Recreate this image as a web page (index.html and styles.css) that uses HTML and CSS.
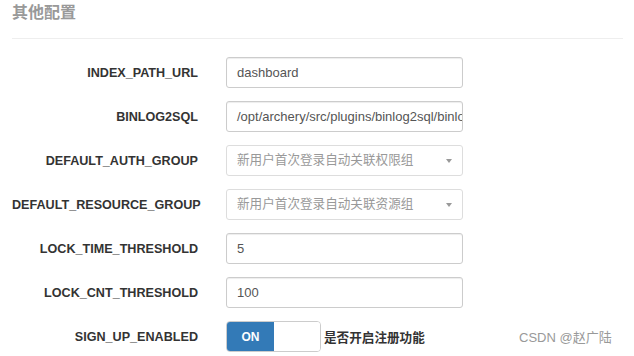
FILE: index.html
```html
<!DOCTYPE html>
<html>
<head>
<meta charset="utf-8">
<link rel="stylesheet" href="styles.css">
</head>
<body>
<div class="page">
  <h4 class="title">其他配置</h4>
  <div class="rule"></div>
  <div class="form">
    <div class="row"><label class="lbl">INDEX_PATH_URL</label><div class="field"><div class="input">dashboard</div></div></div>
    <div class="row"><label class="lbl">BINLOG2SQL</label><div class="field"><div class="input clip">/opt/archery/src/plugins/binlog2sql/binlog2sql.py</div></div></div>
    <div class="row"><label class="lbl">DEFAULT_AUTH_GROUP</label><div class="field"><div class="input select"><span class="ph">新用户首次登录自动关联权限组</span><span class="caret"></span></div></div></div>
    <div class="row"><label class="lbl">DEFAULT_RESOURCE_GROUP</label><div class="field"><div class="input select"><span class="ph">新用户首次登录自动关联资源组</span><span class="caret"></span></div></div></div>
    <div class="row"><label class="lbl">LOCK_TIME_THRESHOLD</label><div class="field"><div class="input">5</div></div></div>
    <div class="row"><label class="lbl">LOCK_CNT_THRESHOLD</label><div class="field"><div class="input">100</div></div></div>
    <div class="row"><label class="lbl">SIGN_UP_ENABLED</label><div class="field switch-field"><div class="switch"><span class="on">ON</span><span class="off"></span></div><span class="switch-label">是否开启注册功能</span></div></div>
  </div>
</div>
<div class="watermark">CSDN @赵广陆</div>
</body>
</html>
```
FILE: styles.css
```css
html, body {
  margin: 0;
  padding: 0;
  background: #fff;
  width: 634px;
  height: 356px;
  overflow: hidden;
  font-family: "Liberation Sans", Arial, "Noto Sans CJK SC", sans-serif;
  color: #333;
}
.page {
  padding: 0 11px 0 12px;
}
.title {
  margin: 0;
  padding-top: 4px;
  height: 22px;
  line-height: 18px;
  font-size: 16px;
  font-weight: bold;
  color: #999;
}
.rule {
  height: 1px;
  background: #eee;
  margin-top: 12px;
  width: 611px;
}
.form {
  display: flex;
  flex-direction: column;
  gap: 13px;
  margin-top: 18px;
}
.row {
  display: flex;
  align-items: center;
  height: 31px;
}
.lbl {
  width: 186px;
  text-align: right;
  font-size: 12.6px;
  font-weight: bold;
  color: #333;
}
.field {
  margin-left: 28px;
  width: 237px;
}
.input {
  box-sizing: border-box;
  height: 31px;
  border: 1px solid #ccc;
  border-radius: 3px;
  padding: 0 10px;
  font-size: 13px;
  line-height: 29px;
  color: #555;
  white-space: nowrap;
  overflow: hidden;
  box-shadow: inset 0 1px 1px rgba(0,0,0,0.075);
}
.clip {
  text-overflow: clip;
}
.select {
  display: flex;
  align-items: center;
  justify-content: space-between;
  box-shadow: none;
  border-color: #ddd;
}
.ph {
  color: #999;
  font-size: 12.6px;
}
.caret {
  width: 0;
  height: 0;
  border-left: 3px solid transparent;
  border-right: 3px solid transparent;
  border-top: 4px solid #999;
  margin-right: 0;
}
.switch-field {
  display: flex;
  align-items: center;
  width: auto;
}
.switch {
  box-sizing: border-box;
  display: flex;
  width: 95px;
  height: 31px;
  border: 1px solid #ccc;
  border-radius: 4px;
  overflow: hidden;
}
.on {
  width: 47px;
  background: #337ab7;
  color: #fff;
  font-size: 12px;
  font-weight: bold;
  display: flex;
  align-items: center;
  justify-content: center;
}
.off {
  flex: 1;
  background: #fff;
}
.switch-label {
  margin-left: 3px;
  font-size: 12.6px;
  font-weight: bold;
  color: #333;
}
.watermark {
  position: absolute;
  left: 519px;
  top: 327px;
  font-size: 13px;
  color: #999;
}
```
